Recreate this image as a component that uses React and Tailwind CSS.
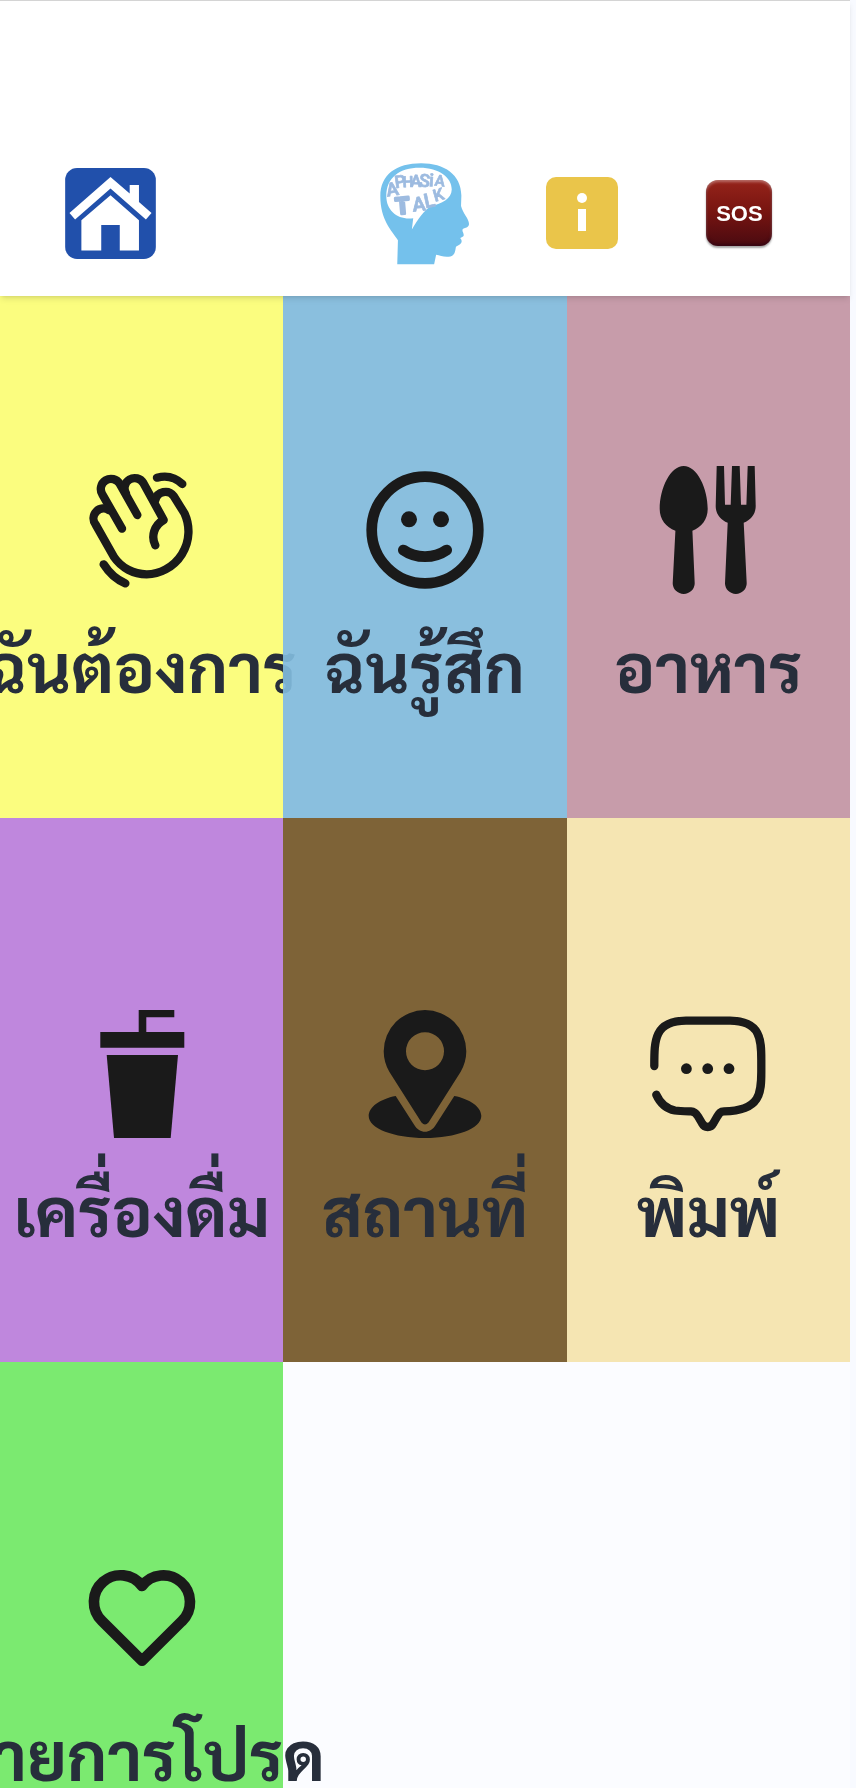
import { TbHeart } from "react-icons/tb";

function HomeIcon() {
  return (
    <svg viewBox="0 0 274 275" className="size-[91px]" aria-hidden="true">
      <rect width="274" height="275" rx="36" fill="#2150ab" />
      <path fill="#fff" d="M137 27l58 50V51h28v52l38 33-17 20L137 62 30 156 13 136z" />
      <path fill="#fff" d="M137 82l86 76v91h-58v-77h-56v77H49v-91z" />
    </svg>
  );
}

/* letter, x, baseline, rotation, size */
const LETTERS = [
  ["A", 101, 164, -10, 56],
  ["P", 124, 139, -8, 52],
  ["H", 146, 138, -2, 46],
  ["A", 169, 137, 2, 50],
  ["S", 193, 137, 6, 54],
  ["i", 215, 136, 4, 54],
  ["A", 240, 135, 6, 46],
  ["T", 131, 218, -5, 68],
  ["A", 180, 210, -6, 60],
  ["L", 214, 198, -12, 60],
  ["K", 242, 178, -16, 50],
];

function BrainLogo() {
  return (
    <svg viewBox="55 60 280 315" className="h-[105px] w-[93px]" role="img" aria-label="Aphasia Talk">
      <path
        fill="#74c1ec"
        d="M113 370L115 298C96 268 62 238 62 165C62 100 110 66 185 66C255 66 305 100 306 163L305 195C310 217 330 234 329 250C328 262 312 261 310 265C307 272 314 275 313 284C311 290 303 289 303 293C308 297 308 304 304 308C299 315 290 314 289 321C286 341 282 348 262 348C250 348 240 344 230 342L224 370Z"
      />
      <path
        fill="#fff"
        d="M157 266L161 232C115 238 80 210 80 165C80 110 120 80 180 80C240 80 277 110 277 145C277 174 245 187 217 195C195 204 175 236 157 266Z"
      />
      {LETTERS.map(([c, x, y, r, s], i) => (
        <text
          key={i}
          x={x}
          y={y}
          fontSize={s}
          transform={`rotate(${r} ${x} ${y})`}
          textAnchor="middle"
          fill="#9dbbe0"
          stroke="#9dbbe0"
          strokeWidth={c === "T" ? 9 : 2}
          strokeLinejoin="round"
          className="font-['Roboto','Liberation_Sans',sans-serif] font-semibold"
        >
          {c}
        </text>
      ))}
    </svg>
  );
}

function InfoIcon() {
  return (
    <svg viewBox="0 0 72 72" className="size-[72px]" aria-hidden="true">
      <rect width="72" height="72" rx="10" fill="#eac54a" />
      <circle cx="36" cy="21" r="5" fill="#fff" />
      <path fill="#fff" d="M32 32h8v22h-8z" />
    </svg>
  );
}

function WaveIcon() {
  return (
    <svg
      viewBox="233 78 384 384"
      className="size-32"
      fill="none"
      stroke="currentColor"
      strokeWidth="25"
      strokeLinecap="round"
      strokeLinejoin="round"
      aria-hidden="true"
    >
      <path d="M365 266L306 163A30 30 0 0 1 358 131L411 225" />
      <path d="M377 160A30 30 0 0 1 429 129L490 240C462 255 451 289 465 316" />
      <path d="M465 180A31 31 0 0 1 520 168L553 221A129 129 0 0 1 439 403A119 119 0 0 1 341 351L286 254A30 30 0 0 1 327 211" />
      <path d="M470 113C500 105 525 112 546 132M310 373C327 400 348 419 375 430" />
    </svg>
  );
}

function SmileIcon() {
  return (
    <svg viewBox="0 0 128 128" className="size-32" aria-hidden="true">
      <circle cx="64" cy="64" r="53.3" fill="none" stroke="currentColor" strokeWidth="10.7" />
      <circle cx="48" cy="53.3" r="8" fill="currentColor" />
      <circle cx="80" cy="53.3" r="8" fill="currentColor" />
      <path d="M42.3 84C55 92.9 73 92.9 85.7 84" fill="none" stroke="currentColor" strokeWidth="10.7" strokeLinecap="round" />
    </svg>
  );
}

function FoodIcon() {
  return (
    <svg viewBox="0 0 128 128" className="size-32" fill="currentColor" aria-hidden="true">
      <path d="M39.7 0C53 0 63.7 22 63.7 43C63.7 53 57.500 61.500 48.400 64.700L50.700 117.300A11 10.700 0 0 1 28.700 117.300L31.400 64.700C22 61.500 15.700 53 15.700 43C15.700 22 26.400 0 39.700 0Z" />
      <path d="M72.700 0H80L81 38.700H86.700L88 0H95.700L97 38.700H102.400L103.700 0H110.700L111.700 40C111.700 48 107 54 99.700 56.700L102.700 117.300A10.850 10.700 0 0 1 81 117.300L83.700 56.700C76.500 54 71.700 48 71.700 40Z" />
    </svg>
  );
}

function DrinkIcon() {
  return (
    <svg viewBox="0 0 128 128" className="size-32" fill="currentColor" aria-hidden="true">
      <path d="M60.700 0H96.300V7.300H68.300V22H106.300V37.700H22.300V22H60.700Z" />
      <path d="M28.700 45H100L92.700 128H36Z" />
    </svg>
  );
}

function PlaceIcon() {
  return (
    <svg viewBox="0 0 128 128" className="size-32" fill="currentColor" aria-hidden="true">
      <path
        fillRule="evenodd"
        d="M64 0A41.300 41.300 0 0 0 22.700 41.300C22.700 48.700 24.800 56 28.300 61.700L60.500 112.500Q64 116.500 67.500 112.500L99.700 61.700C103.200 56 105.300 48.700 105.300 41.300A41.300 41.300 0 0 0 64 0ZM64 22.200A19 19 0 1 1 64 60.200A19 19 0 1 1 64 22.200Z"
      />
      <path d="M34.700 86L53.300 115C58.500 124 69.500 124 74.700 115L93.300 86C109 89 120.300 97 120.300 106C120.300 118.500 95 128 64 128C33 128 7.700 118.500 7.700 106C7.700 97 19 89 34.700 86Z" />
    </svg>
  );
}

function ChatIcon() {
  return (
    <svg viewBox="0 0 128 128" className="size-32" aria-hidden="true">
      <path
        d="M10.300 56C10.300 30 10.300 11 42 10.700H86C117 11 117.300 30 117.300 50V62C117.300 82 117 101 80 101.400C76.500 101.500 75.500 103 73.300 106.500L69.500 113C66.700 118.300 60.700 118.300 57.900 113L54.100 106.500C52 103 50.500 101.500 47 101.400C41 101.300 35.500 101.300 31 100.500C22.500 98.700 16 93 12.300 84.700"
        fill="none"
        stroke="currentColor"
        strokeWidth="8.300"
        strokeLinecap="round"
      />
      <circle cx="42.400" cy="58.700" r="5.400" fill="currentColor" />
      <circle cx="63.700" cy="58.700" r="5.400" fill="currentColor" />
      <circle cx="85" cy="58.700" r="5.400" fill="currentColor" />
    </svg>
  );
}

const TILES = [
  { label: "ฉันต้องการ", color: "bg-[#fbfd7f]", icon: <WaveIcon /> },
  { label: "ฉันรู้สึก", color: "bg-[#81badc]/93", icon: <SmileIcon /> },
  { label: "อาหาร", color: "bg-[#c79caa]", icon: <FoodIcon /> },
  { label: "เครื่องดื่ม", color: "bg-[#bf87dd]", icon: <DrinkIcon /> },
  { label: "สถานที่", color: "bg-[#7e6337]", icon: <PlaceIcon /> },
  { label: "พิมพ์", color: "bg-[#f5e5b2]", icon: <ChatIcon /> },
  { label: "รายการโปรด", color: "bg-[#7bea70]", icon: <TbHeart className="size-32" /> },
];

export default function App() {
  return (
    <div className="h-screen overflow-x-hidden overflow-y-auto bg-[#f8faff] pr-1.5 [scrollbar-width:none]">
      <div className="flex flex-col bg-[#fbfcff]">
        <header className="sticky top-0 z-10 -mb-[22px] border-t border-[#d4d4d4] bg-white px-8 pt-36 pb-[15px] shadow-md">
          <nav className="grid h-[136px] grid-cols-5 place-items-center">
            <a href="#home" aria-label="Home">
              <HomeIcon />
            </a>
            <a href="#about" className="col-start-3">
              <BrainLogo />
            </a>
            <button type="button" aria-label="Info">
              <InfoIcon />
            </button>
            <button
              type="button"
              className="size-[66px] rounded-xl bg-linear-to-b from-[#96231a] via-[#761410] to-[#4a0a10] font-['Liberation_Sans',sans-serif] text-[22px] font-bold text-white shadow-[0_2px_2px_rgba(0,0,0,0.35),inset_0_2px_3px_rgba(255,255,255,0.35),inset_0_-2px_3px_rgba(40,0,20,0.6)]"
            >
              SOS
            </button>
          </nav>
        </header>
        <main className="grid auto-rows-[544px] grid-cols-3">
          {TILES.map((t) => (
            <button
              key={t.label}
              type="button"
              className={`relative flex min-w-0 flex-col items-center gap-5 pt-48 ${t.color}`}
            >
              <span className="text-[#1a1a1a]">{t.icon}</span>
              <span className="font-['Sarabun','Noto_Sans_Thai_Looped','Noto_Sans',sans-serif] text-[68px] leading-[102px] font-bold whitespace-nowrap text-[#272e3b]">
                {t.label}
              </span>
            </button>
          ))}
        </main>
      </div>
    </div>
  );
}
